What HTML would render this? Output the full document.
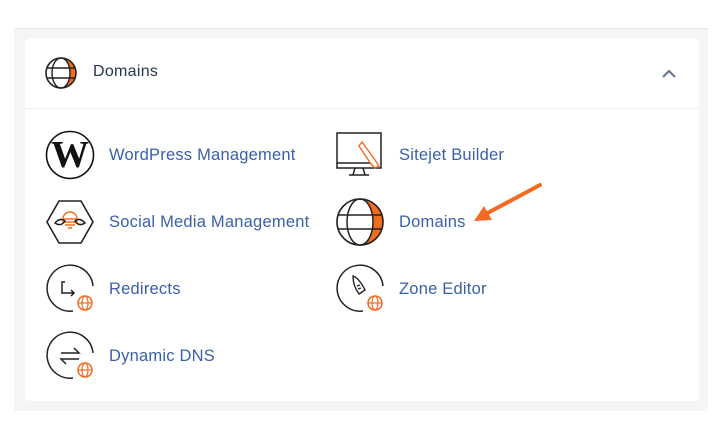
<!DOCTYPE html>
<html><head><meta charset="utf-8"><style>
body{margin:0;width:720px;height:440px;background:#fff;position:relative;font-family:"Liberation Sans",sans-serif;overflow:hidden}
.bg{position:absolute;left:14px;top:28px;width:694px;height:382px;background:#f5f5f5;border-top:1px solid #e6e6e6}
.card{position:absolute;left:25px;top:38px;width:674px;height:363px;background:#fff;border-radius:5px}
.hdr{position:absolute;left:0;top:0;width:674px;height:70px;border-bottom:1px solid #edf0f4}
.t{position:absolute;font-size:16.5px;letter-spacing:0.22px;color:#3a5fae;white-space:nowrap}
.h{position:absolute;left:68px;top:25px;font-size:16px;letter-spacing:0.3px;color:#263650}
svg{position:absolute}
</style></head><body>
<div class="bg"></div>
<div class="card">
<div class="hdr">
<svg style="left:19px;top:18px" width="34" height="34" viewBox="0 0 34 34"><path d="M17 2 A15 15 0 0 1 17 32 A9 15 0 0 0 17 2Z" fill="#f26b21"/><circle cx="17" cy="17" r="15" fill="none" stroke="#222" stroke-width="1.6"/><ellipse cx="17" cy="17" rx="9" ry="15" fill="none" stroke="#222" stroke-width="1.4"/><path d="M2.5 12H31.5M2.5 22H31.5" stroke="#222" stroke-width="1.4"/></svg>
<div class="h">Domains</div>
<svg style="left:636px;top:30px" width="16" height="12" viewBox="0 0 16 12"><path d="M2 9L8 3L14 9" fill="none" stroke="#6a7a92" stroke-width="2.2"/></svg>
</div>
</div>
<svg style="left:45px;top:130px" width="50" height="50" viewBox="0 0 50 50"><circle cx="25" cy="25" r="23.5" fill="none" stroke="#111" stroke-width="1.6"/><text x="25" y="37" text-anchor="middle" font-family="Liberation Serif" font-weight="bold" font-size="38" fill="#111">W</text></svg>
<div class="t" style="left:109px;top:146px">WordPress Management</div>
<svg style="left:45px;top:197px" width="50" height="50" viewBox="0 0 50 50"><path d="M14 4H36L48 25L36 46H14L2 25Z" fill="none" stroke="#222" stroke-width="1.6"/><path d="M18 22A7 7 0 0 1 32 22Z M17 25H33M20 28H30M23 31H27" fill="none" stroke="#f26b21" stroke-width="1.4"/><path d="M10 26Q15 20 20 24Q16 30 10 26Z M40 26Q35 20 30 24Q34 30 40 26Z" fill="none" stroke="#222" stroke-width="1.5"/></svg>
<div class="t" style="left:109px;top:213px">Social Media Management</div>
<svg style="left:45px;top:264px" width="50" height="50" viewBox="0 0 50 50"><path d="M28 47A23 23 0 1 1 48 22" fill="none" stroke="#222" stroke-width="1.5"/><path d="M20 18H17V29H29M26 26L29 29L26 32" fill="none" stroke="#222" stroke-width="1.5"/><circle cx="40" cy="39" r="7" fill="none" stroke="#f26b21" stroke-width="1.5"/><ellipse cx="40" cy="39" rx="3" ry="7" fill="none" stroke="#f26b21" stroke-width="1.2"/><path d="M33 39H47" stroke="#f26b21" stroke-width="1.2"/></svg>
<div class="t" style="left:109px;top:280px">Redirects</div>
<svg style="left:45px;top:331px" width="50" height="50" viewBox="0 0 50 50"><path d="M28 47A23 23 0 1 1 48 22" fill="none" stroke="#222" stroke-width="1.5"/><path d="M16 22H34L29 17M34 28H16L21 33" fill="none" stroke="#222" stroke-width="1.5"/><circle cx="40" cy="39" r="7" fill="none" stroke="#f26b21" stroke-width="1.5"/><ellipse cx="40" cy="39" rx="3" ry="7" fill="none" stroke="#f26b21" stroke-width="1.2"/><path d="M33 39H47" stroke="#f26b21" stroke-width="1.2"/></svg>
<div class="t" style="left:109px;top:347px">Dynamic DNS</div>
<svg style="left:335px;top:130px" width="50" height="50" viewBox="0 0 50 50"><path d="M2 3H46V38H2Z M2 33H38" fill="none" stroke="#222" stroke-width="1.5"/><path d="M20 38L18 45H30L28 38M14 45H34" fill="none" stroke="#222" stroke-width="1.5"/><path d="M27 12L40 30L44 36L40 38L36 34L24 16Z" fill="#fff" stroke="#f26b21" stroke-width="1.4"/></svg>
<div class="t" style="left:399px;top:146px">Sitejet Builder</div>
<svg style="left:335px;top:197px" width="50" height="50" viewBox="0 0 50 50"><path d="M25 2A23 23 0 0 1 25 48A13 23 0 0 0 25 2Z" fill="#f26b21"/><circle cx="25" cy="25" r="23" fill="none" stroke="#222" stroke-width="1.6"/><ellipse cx="25" cy="25" rx="13" ry="23" fill="none" stroke="#222" stroke-width="1.5"/><path d="M2.5 18H47.5M2.5 32H47.5" stroke="#222" stroke-width="1.5"/></svg>
<div class="t" style="left:399px;top:213px">Domains</div>
<svg style="left:470px;top:180px" width="80" height="50" viewBox="0 0 80 50"><path d="M70 5L12 36" stroke="#f26b21" stroke-width="4" stroke-linecap="round"/><path d="M4 41L14 26L22 40Z" fill="#f26b21"/></svg>
<svg style="left:335px;top:264px" width="50" height="50" viewBox="0 0 50 50"><path d="M28 47A23 23 0 1 1 48 22" fill="none" stroke="#222" stroke-width="1.5"/><path d="M18 12Q24 14 30 26L24 30Q18 22 18 12Z M22 22L25 21M23 25L26 24" fill="none" stroke="#222" stroke-width="1.4"/><circle cx="40" cy="39" r="7" fill="none" stroke="#f26b21" stroke-width="1.5"/><ellipse cx="40" cy="39" rx="3" ry="7" fill="none" stroke="#f26b21" stroke-width="1.2"/><path d="M33 39H47" stroke="#f26b21" stroke-width="1.2"/></svg>
<div class="t" style="left:399px;top:280px">Zone Editor</div>
</body></html>
